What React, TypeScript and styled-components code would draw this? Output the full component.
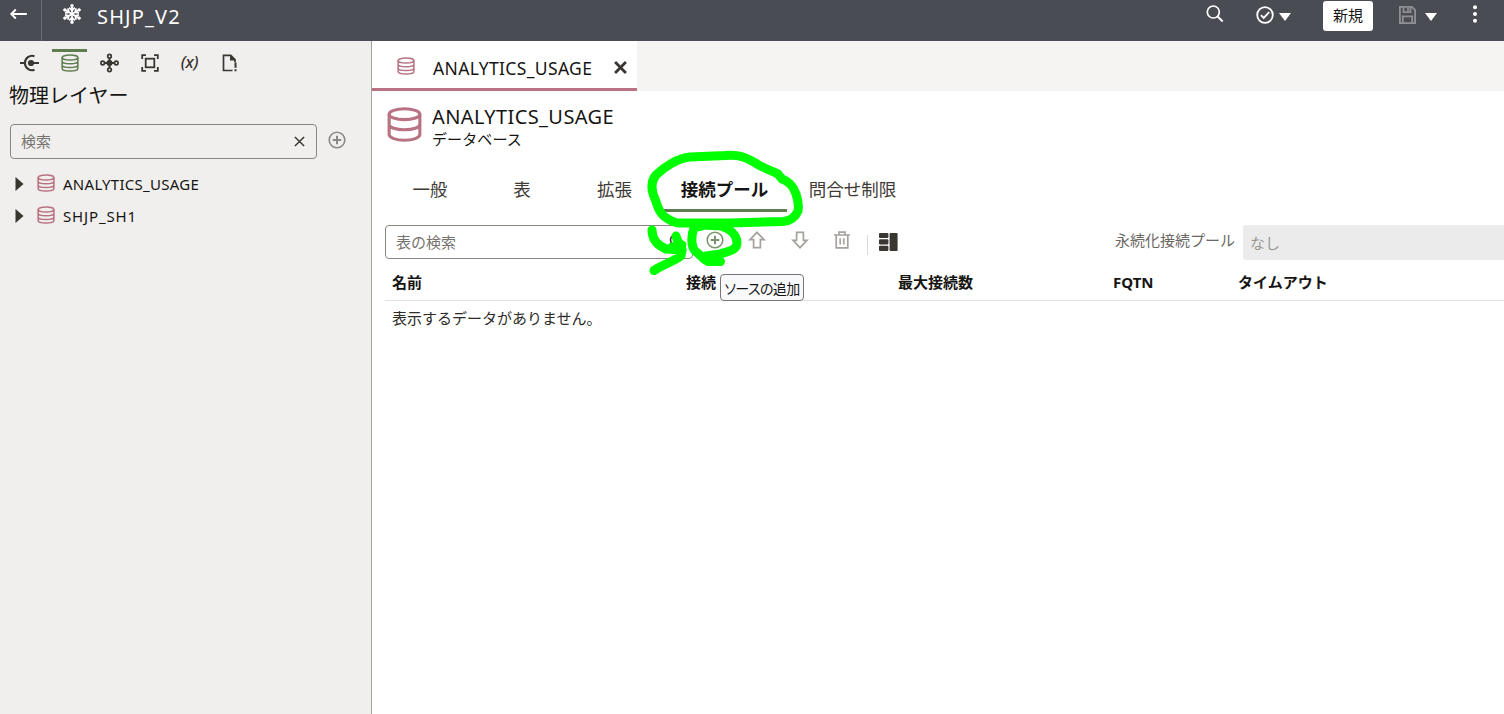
import React from "react";
import styled, { createGlobalStyle } from "styled-components";

const Global = createGlobalStyle`
  * { box-sizing: border-box; }
  body { margin: 0; overflow: hidden; background: #fff; font-family: "Noto Sans", "Noto Sans CJK JP", sans-serif; color: #161513; }
  svg { display: block; flex: none; }
`;

const Page = styled.div`
  position: relative;
  width: 1504px;
  height: 714px;
  overflow: hidden;
  display: flex;
  flex-direction: column;
`;

const Header = styled.header`
  height: 41px;
  flex: none;
  display: flex;
  background: #4a4c54;
  color: #fff;
`;
const BackCell = styled.div`
  width: 42px;
  padding: 5px 0 0 9px;
  border-right: 1px solid #6c6e75;
`;
const Brand = styled.div`
  display: flex;
  flex: 1;
  padding: 3px 0 0 19px;
  gap: 14px;
`;
const Label = styled.span<{ $size: number; $line: number; $spacing?: number; $weight?: number; $color?: string }>`
  font-size: ${(p) => p.$size}px;
  line-height: ${(p) => p.$line}px;
  letter-spacing: ${(p) => p.$spacing ?? 0}px;
  font-weight: ${(p) => p.$weight ?? 400};
  color: ${(p) => p.$color ?? "inherit"};
  white-space: nowrap;
`;
const HeaderTools = styled.div`
  display: flex;
  align-items: center;
  height: 31px;
  padding-right: 26px;
`;
const ToolSlot = styled.div<{ $gap: number; $drop?: number; $lift?: number }>`
  margin-left: ${(p) => p.$gap}px;
  padding-top: ${(p) => p.$drop ?? 0}px;
  padding-bottom: ${(p) => p.$lift ?? 0}px;
`;
const NewButton = styled.button`
  width: 50px;
  height: 30px;
  margin: 1px 0 0 32px;
  padding: 0 0 3px;
  border: 0;
  border-radius: 3px;
  background: #fff;
  color: #161513;
  font: 15px/27px "Noto Sans CJK JP", sans-serif;
`;

const Body = styled.div`
  flex: 1;
  display: flex;
  min-height: 0;
`;
const Sidebar = styled.aside`
  width: 372px;
  flex: none;
  background: #f0efed;
  border-right: 1px solid #a5a3a0;
`;
const LayerTabs = styled.nav`
  display: flex;
  gap: 5px;
  padding: 8px 0 7px 12px;
`;
const LayerTab = styled.div<{ $active?: boolean }>`
  width: 35px;
  height: 25px;
  border-top: 3px solid ${(p) => (p.$active ? "#5f7d4f" : "transparent")};
  color: ${(p) => (p.$active ? "#5f7d4f" : "#3a3631")};
  display: flex;
  justify-content: center;
  align-items: center;
`;
const SideTitle = styled.h1`
  margin: 0;
  padding-left: 9px;
  height: 33px;
  font: 400 20px/27px "Noto Sans CJK JP", sans-serif;
`;
const SearchRow = styled.div`
  display: flex;
  margin-top: 10px;
  padding-left: 10px;
  gap: 11px;
`;
const SearchBox = styled.div<{ $width: number; $height: number; $right: number; $bottom?: number }>`
  width: ${(p) => p.$width}px;
  height: ${(p) => p.$height}px;
  flex: none;
  border: 1px solid #8b8580;
  border-radius: 4px;
  padding: 0 ${(p) => p.$right}px ${(p) => p.$bottom ?? 0}px 10px;
  display: flex;
  align-items: center;
  justify-content: space-between;
`;
const AddSlot = styled.div`
  padding-top: 7px;
  color: #8b8986;
`;
const Tree = styled.div`
  padding: 9px 0 0 15px;
`;
const TreeRow = styled.div`
  height: 32px;
  display: flex;
  align-items: center;
`;
const TreeIcon = styled.div`
  color: #b87281;
  margin: 0 8px 3px 13px;
`;

const Main = styled.main`
  flex: 1;
  min-width: 0;
  background: #fff;
`;
const FileTabs = styled.div`
  height: 50px;
  background: #f5f4f2;
  display: flex;
`;
const FileTab = styled.div`
  width: 265px;
  background: #fff;
  border-bottom: 3px solid #b87281;
  display: flex;
  align-items: center;
  padding: 7px 0 0 25px;
`;
const TabIcon = styled.div`
  color: #b87281;
  margin: 0 18px 5px 0;
`;
const Title = styled.div`
  height: 73px;
  padding: 13px 0 0 15px;
  display: flex;
  gap: 10px;
`;
const TitleIcon = styled.div`
  color: #b87281;
  padding-top: 3px;
`;
const TitleText = styled.div`
  display: flex;
  flex-direction: column;
`;
const Sections = styled.nav`
  height: 48px;
  display: flex;
  padding-left: 14px;
`;
const Section = styled.div<{ $width: number; $active?: boolean }>`
  width: ${(p) => p.$width}px;
  flex: none;
  height: 48px;
  padding-top: 11px;
  text-align: center;
  font: ${(p) => (p.$active ? 700 : 400)} 17.5px/27px "Noto Sans CJK JP", sans-serif;
  color: ${(p) => (p.$active ? "#161513" : "#3f3b37")};
  white-space: nowrap;
`;
const Underline = styled.div`
  width: 125px;
  height: 3px;
  margin: 7px auto 0;
  background: #5f7d4f;
`;
const Toolbar = styled.div`
  display: flex;
  height: 59px;
  padding: 13px 0 0 13px;
`;
const Actions = styled.div`
  display: flex;
  flex: none;
  width: 422px;
  padding: 6px 0 0 13px;
  gap: 22.8px;
  color: #a5a29f;
`;
const Separator = styled.div`
  width: 1px;
  height: 20px;
  margin: 4px -12px 0 -8px;
  background: #dcdad8;
`;
const PoolLabel = styled.span`
  flex: none;
  width: 128px;
  font-size: 15px;
  line-height: 31px;
  color: #6b6764;
  white-space: nowrap;
`;
const PoolField = styled.div`
  flex: 1;
  height: 35px;
  padding-left: 7px;
  border-radius: 3px 0 0 3px;
  background: #ebebeb;
`;
const TableHead = styled.div`
  display: grid;
  grid-template-columns: 294px 212px 215px 125px 1fr;
  height: 30px;
  margin-left: 13px;
  padding-left: 7px;
  border-bottom: 1px solid #e3e1df;
`;
const Empty = styled.div`
  padding: 5px 0 0 20px;
`;
const Tooltip = styled.div`
  position: absolute;
  left: 720px;
  top: 274px;
  width: 84px;
  height: 27px;
  border: 1px solid #767676;
  border-radius: 4px;
  background: #f9f9fb;
  display: flex;
  justify-content: center;
`;
const TipText = styled.span`
  font: 14px/26px "Noto Sans CJK JP", sans-serif;
  font-feature-settings: "palt";
  letter-spacing: -0.6px;
  white-space: nowrap;
`;
const Markup = styled.svg`
  position: absolute;
  left: 640px;
  top: 145px;
  pointer-events: none;
`;

const Database = ({ size = 18, sw = 1.6 }: { size?: number; sw?: number }) => (
  <svg width={size} height={size} viewBox="0 0 18 18" fill="none" stroke="currentColor" strokeWidth={sw}>
    <ellipse cx="9" cy="3.7" rx="7.9" ry="2.8" />
    <path d="M1.1 3.7v10.5c0 1.6 3.5 2.9 7.9 2.9s7.9-1.3 7.9-2.9V3.7M1.1 9c0 1.5 3.5 2.7 7.9 2.7s7.9-1.2 7.9-2.7" />
  </svg>
);
const DatabaseTall = () => (
  <svg width="18" height="18" viewBox="0 0 18 18" fill="none" stroke="currentColor" strokeWidth="1.5">
    <ellipse cx="9" cy="3.6" rx="7.9" ry="2.5" />
    <path d="M1.1 3.6v11c0 1.4 3.5 2.5 7.9 2.5s7.9-1.1 7.9-2.5v-11M1.1 7.2c0 1.4 3.5 2.5 7.9 2.5s7.9-1.1 7.9-2.5M1.1 10.9c0 1.4 3.5 2.5 7.9 2.5s7.9-1.1 7.9-2.5" />
  </svg>
);
const PlusCircle = ({ color = "currentColor" }: { color?: string }) => (
  <svg width="18" height="18" viewBox="0 0 18 18" fill="none" stroke={color} strokeWidth="1.6">
    <circle cx="9" cy="9" r="7.8" />
    <path d="M9 4.7v8.6M4.7 9h8.6" strokeWidth="2" />
  </svg>
);
const Caret = () => (
  <svg width="12" height="8" viewBox="0 0 12 8"><path d="M0 0h12L6 8z" fill="#fff" /></svg>
);
const Cross = ({ size, sw }: { size: number; sw: number }) => (
  <svg width={size} height={size} viewBox="0 0 12 12" stroke="#3a3631" strokeWidth={sw}>
    <path d="M1 1l10 10M11 1L1 11" />
  </svg>
);
const Snowflake = () => (
  <svg width="22" height="22" viewBox="0 0 22 22" fill="none" stroke="#fff" strokeWidth="2">
    {[0, 60, 120, 180, 240, 300].map((a) => (
      <g key={a} transform={`rotate(${a} 11 11)`}>
        <path d="M11 11V3M8.2 4.6l2.8 2.8 2.8-2.8" strokeWidth="1.8" />
        <circle cx="11" cy="2.7" r="1.4" fill="#fff" strokeWidth=".6" />
      </g>
    ))}
  </svg>
);
const Connect = () => (
  <svg width="22" height="20" viewBox="0 0 22 20" fill="none" stroke="currentColor" strokeWidth="2.1">
    <path d="M15.5 3.2A7.2 7.2 0 1 0 15.500 16.800M1 10h4M12 10h8" />
    <circle cx="12" cy="10" r="3.1" fill="currentColor" stroke="none" />
  </svg>
);
const Nodes = () => (
  <svg width="20" height="20" viewBox="0 0 20 20" fill="none" stroke="currentColor" strokeWidth="1.7">
    <path d="M9.500 4v12M4 10h11" strokeWidth="2" />
    <circle cx="9.500" cy="10" r="2.2" fill="currentColor" />
    {[[9.5, 3.2], [9.5, 16.8], [2.7, 10], [16.3, 10]].map(([x, y]) => (
      <circle key={`${x}-${y}`} cx={x} cy={y} r="1.8" fill="#f0efed" />
    ))}
  </svg>
);
const Frame = () => (
  <svg width="18" height="18" viewBox="0 0 18 18" fill="none" stroke="currentColor" strokeWidth="1.8">
    <path d="M5 1.2H1.2V5M13 1.2h3.8V5M5 16.8H1.2V13M13 16.8h3.8V13" />
    <rect x="4.7" y="4.7" width="8.6" height="8.6" />
  </svg>
);
const FileAlert = () => (
  <svg width="16" height="18" viewBox="0 0 16 18" fill="none" stroke="currentColor" strokeWidth="1.7">
    <path d="M10.5 16.5H1.500V1.300h7.200l4.300 4.300v2.600" />
    <path d="M8 1v5.500h5.500z" fill="currentColor" stroke="none" />
    <path d="M13.500 8.500v5.200M13.500 15.200v2" strokeWidth="2" />
  </svg>
);
const Variable = styled.span`
  font: italic 500 16.5px/22px "Noto Sans", sans-serif;
  height: 24px;
  letter-spacing: -0.2px;
`;
const Arrow = ({ down }: { down?: boolean }) => (
  <svg width="20" height="18" viewBox="0 0 20 18" fill="none" stroke="currentColor" strokeWidth="1.7">
    <path d="M10 1.3L17 8.600h-3.600v8H6.600v-8H3z" transform={down ? "rotate(180 10 9)" : undefined} />
  </svg>
);
const Trash = () => (
  <svg width="20" height="18" viewBox="0 0 20 18" fill="none" stroke="currentColor" strokeWidth="1.7">
    <path d="M2 4h16M4.200 4v12.800h11.600V4M7 4V1.200h6V4M8.200 7.300v6.200M11.800 7.300v6.200" />
  </svg>
);
const Columns = () => (
  <svg width="19" height="18" viewBox="0 0 19 18" fill="#3a3631">
    <rect x="0" y="0" width="9.400" height="5" rx="1" />
    <rect x="0" y="6.300" width="9.400" height="5.200" rx="1" />
    <rect x="0" y="12.800" width="9.400" height="5.200" rx="1" />
    <rect x="10.600" y="0" width="8" height="18" rx="1" />
  </svg>
);

const TREE = [
  { name: "ANALYTICS_USAGE", spacing: 0.27 },
  { name: "SHJP_SH1", spacing: 0.85 },
];

export default function App() {
  return (
    <Page>
      <Global />
      <Header>
        <BackCell>
          <svg width="20" height="18" viewBox="0 0 20 18" fill="none" stroke="#fff" strokeWidth="1.9"><path d="M6.800 4.500L2.300 9l4.500 4.500M2.500 9h15.300" /></svg>
        </BackCell>
        <Brand>
          <Snowflake />
          <Label $size={20} $line={27} $spacing={1.15}>SHJP_V2</Label>
        </Brand>
        <HeaderTools>
          <ToolSlot $gap={0} $lift={3}><svg width="18" height="18" viewBox="0 0 18 18" fill="none" stroke="#fff" strokeWidth="1.7"><circle cx="7.300" cy="7" r="6" /><path d="M11.600 11.500l5.100 5" strokeWidth="2" /></svg></ToolSlot>
          <ToolSlot $gap={32} $lift={2}><svg width="18" height="18" viewBox="0 0 18 18" fill="none" stroke="#fff" strokeWidth="1.8"><circle cx="9" cy="9" r="7.800" /><path d="M5 9.200l2.700 2.700 5.500-5.700" /></svg></ToolSlot>
          <ToolSlot $gap={5} $drop={3}><Caret /></ToolSlot>
          <NewButton>新規</NewButton>
          <ToolSlot $gap={26} $lift={2}><svg width="17" height="18" viewBox="0 0 17 18" fill="none" stroke="#8f9095" strokeWidth="1.8"><path d="M.9.9h12l3.200 3.300v12.900H.9zM4.500 1v5.200h7V1M3.800 17v-6.700h9.400V17M9 2v3" /></svg></ToolSlot>
          <ToolSlot $gap={9} $drop={3}><Caret /></ToolSlot>
          <ToolSlot $gap={35} $lift={3}><svg width="6" height="18" viewBox="0 0 6 18" fill="#fff"><circle cx="3" cy="2.200" r="2" /><circle cx="3" cy="9" r="2" /><circle cx="3" cy="15.800" r="2" /></svg></ToolSlot>
        </HeaderTools>
      </Header>
      <Body>
        <Sidebar>
          <LayerTabs>
            <LayerTab><Connect /></LayerTab>
            <LayerTab $active><DatabaseTall /></LayerTab>
            <LayerTab><Nodes /></LayerTab>
            <LayerTab><Frame /></LayerTab>
            <LayerTab><Variable>(x)</Variable></LayerTab>
            <LayerTab><FileAlert /></LayerTab>
          </LayerTabs>
          <SideTitle>物理レイヤー</SideTitle>
          <SearchRow>
            <SearchBox $width={307} $height={35} $right={11} $bottom={1}>
              <Label $size={15} $line={22} $color="#77736f">検索</Label>
              <Cross size={11} sw={1.6} />
            </SearchBox>
            <AddSlot><PlusCircle /></AddSlot>
          </SearchRow>
          <Tree>
            {TREE.map(({ name, spacing }) => (
              <TreeRow key={name}>
                <svg width="9" height="14" viewBox="0 0 9 14"><path d="M.5 0L8.500 7l-8 7z" fill="#3a3631" /></svg>
                <TreeIcon><DatabaseTall /></TreeIcon>
                <Label $size={15} $line={22} $spacing={spacing}>{name}</Label>
              </TreeRow>
            ))}
          </Tree>
        </Sidebar>
        <Main>
          <FileTabs>
            <FileTab>
              <TabIcon><DatabaseTall /></TabIcon>
              <Label $size={17.5} $line={24} $spacing={0.35}>ANALYTICS_USAGE</Label>
              <ToolSlot $gap={22} $lift={1}><Cross size={13} sw={2.6} /></ToolSlot>
            </FileTab>
          </FileTabs>
          <Title>
            <TitleIcon><Database size={35} /></TitleIcon>
            <TitleText>
              <Label $size={20} $line={26} $spacing={0.4}>ANALYTICS_USAGE</Label>
              <Label $size={15} $line={18} $spacing={0.1}>データベース</Label>
            </TitleText>
          </Title>
          <Sections>
            <Section $width={88}>一般</Section>
            <Section $width={96}>表</Section>
            <Section $width={89}>拡張</Section>
            <Section $width={131} $active>接続プール<Underline /></Section>
            <Section $width={125}>問合せ制限</Section>
          </Sections>
          <Toolbar>
            <SearchBox $width={308} $height={34} $right={5}>
              <Label $size={15} $line={22} $color="#77736f">表の検索</Label>
              <svg width="18" height="18" viewBox="0 0 18 18" fill="none" stroke="#3a3631" strokeWidth="1.6"><circle cx="6.500" cy="7" r="5" /><path d="M10 11l2 2" /></svg>
            </SearchBox>
            <Actions>
              <PlusCircle color="#7b946d" />
              <Arrow />
              <Arrow down />
              <Trash />
              <Separator />
              <ToolSlot $gap={0} $drop={2}><Columns /></ToolSlot>
            </Actions>
            <PoolLabel>永続化接続プール</PoolLabel>
            <PoolField><Label $size={15} $line={36} $color="#999694">なし</Label></PoolField>
          </Toolbar>
          <TableHead>
            {["名前", "接続", "最大接続数", "FQTN", "タイムアウト"].map((h) => (
              <Label key={h} $size={15} $line={22} $weight={700}>{h}</Label>
            ))}
          </TableHead>
          <Empty><Label $size={15} $line={24} $color="#2d2a27">表示するデータがありません。</Label></Empty>
        </Main>
      </Body>
      <Tooltip><TipText>ソースの追加</TipText></Tooltip>
      <Markup width="180" height="135" viewBox="0 0 180 135" fill="none" stroke="#00ff00" strokeWidth="9" strokeLinecap="round" strokeLinejoin="round">
        <path d="M25 72C17 66 18 60 15 54C11 45 11 36 16 30C24 22 38 13 50 12L85 10.500C102 9 108 14 117 19C125 24 131 25 138 29L142 34C151 37 154 43 156 49C158 55 159 61 158 66C155 73 149 76 143 76.500L90 78L40 78C33 78 30 75 25 72Z" />
        <path d="M62 81L54 83C51 90 51 101 55 106C60 109 62 114 68 116.500L80.500 116.500M66 111L80 109C89 106 97 105 97 98C97 90 90 84 81 81L62 80" />
        <path d="M12 85C12 96 19 101 26 104L42 105C41 99 37 97 36 91M32 102L42 100" />
        <path d="M42 105L41 111C33 117 23 119 14 125.500" />
      </Markup>
    </Page>
  );
}
